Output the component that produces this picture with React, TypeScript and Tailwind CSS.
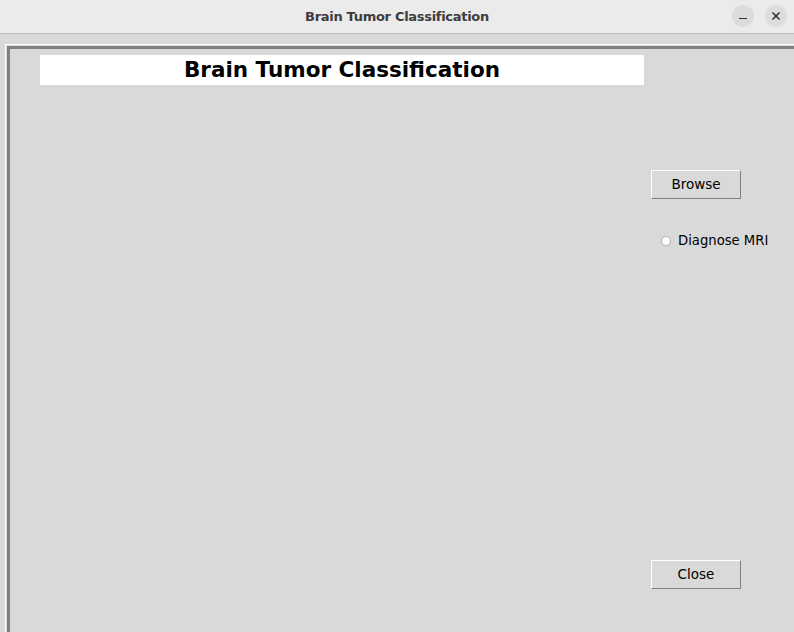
import React from 'react';

export default function App() {
  return (
    <div className="w-[794px] h-[632px] overflow-hidden bg-[#d9d9d9] flex flex-col" style={{ fontFamily: '"DejaVu Sans", sans-serif' }}>
      {/* window title bar */}
      <div className="h-[34px] shrink-0 bg-[#ebebeb] border-b border-[#bdbdbd] relative flex items-center justify-center">
        <span className="text-[13px] font-bold text-[#3d3d3d] tracking-[-0.3px]">Brain Tumor Classification</span>
        <div className="absolute right-[7px] top-[5px] flex gap-[11px]">
          <div className="w-[22px] h-[22px] rounded-full bg-[#dcdcdc] flex items-center justify-center">
            <div className="w-[8px] h-[1.5px] bg-[#333] mt-[5px]" />
          </div>
          <div className="w-[22px] h-[22px] rounded-full bg-[#dcdcdc] flex items-center justify-center">
            <svg width="10" height="10" viewBox="0 0 10 10">
              <path d="M1.5 1.5 L8.5 8.5 M8.5 1.5 L1.5 8.5" stroke="#333" strokeWidth="1.6" />
            </svg>
          </div>
        </div>
      </div>

      {/* outer frame */}
      <div className="flex-1 pt-[10px] pl-[5px]">
        <div className="h-full border-l border-t border-white pl-[1px] pt-[1px]">
          <div className="h-full border-l-[3px] border-t-[3px] border-[#808080] flex">
            <div className="w-[628px] shrink-0 pl-[30px] pt-[6px]">
              <div className="w-[604px] h-[30px] bg-white flex items-center justify-center">
                <span className="text-[21.5px] font-bold text-black leading-none">Brain Tumor Classification</span>
              </div>
            </div>
            <div className="flex-1 flex flex-col pl-[13px] pt-[121px] pb-[43px]">
              <button className="w-[90px] h-[29px] bg-[#d9d9d9] border border-t-white border-l-white border-b-[#808080] border-r-[#808080] text-[13.5px] text-black">
                Browse
              </button>
              <label className="mt-[32px] ml-[10px] flex items-center gap-[7px] text-[13.2px] text-black">
                <span className="w-[10px] h-[10px] rounded-full bg-white border border-[#b0b0b0]" />
                Diagnose MRI
              </label>
              <div className="flex-1" />
              <button className="w-[90px] h-[29px] bg-[#d9d9d9] border border-t-white border-l-white border-b-[#808080] border-r-[#808080] text-[13.5px] text-black">
                Close
              </button>
            </div>
          </div>
        </div>
      </div>
    </div>
  );
}
